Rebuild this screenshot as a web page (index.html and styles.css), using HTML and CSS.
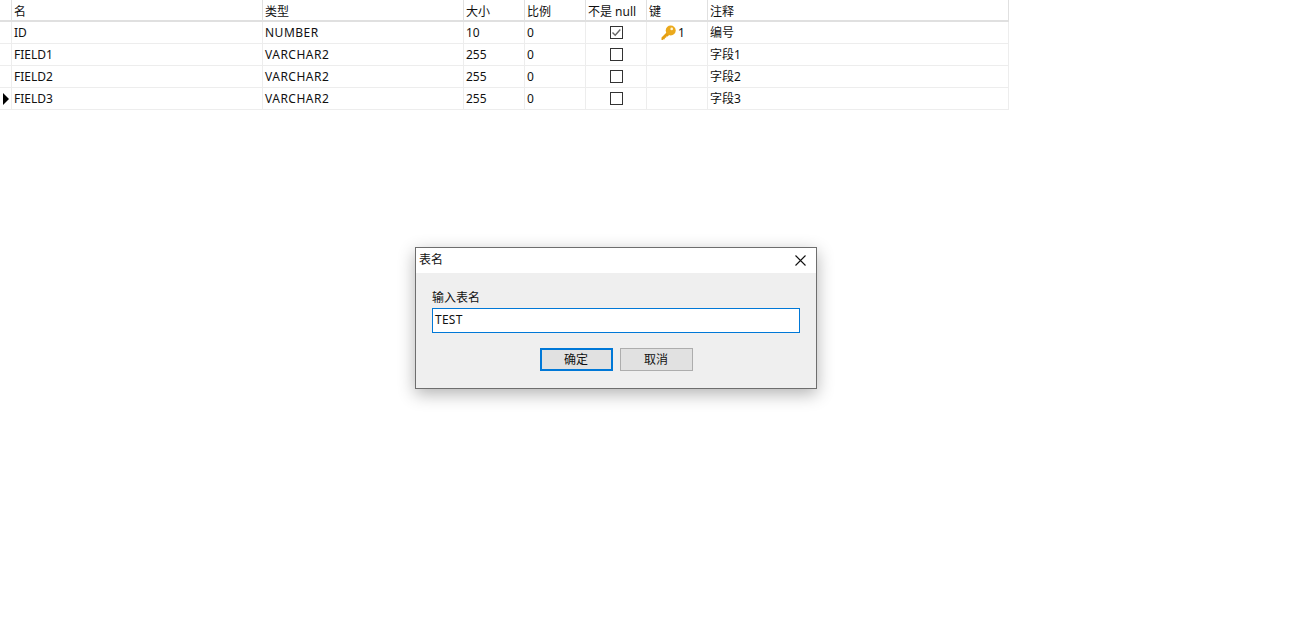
FILE: index.html
```html
<!DOCTYPE html>
<html lang="zh">
<head>
<meta charset="utf-8">
<title>表名</title>
<link rel="stylesheet" href="styles.css">
</head>
<body>
<div class="grid">
  <div class="row head">
    <div class="cell"></div><div class="cell">名</div><div class="cell">类型</div><div class="cell">大小</div><div class="cell">比例</div><div class="cell">不是 null</div><div class="cell">键</div><div class="cell">注释</div>
  </div>
  <div class="row">
    <div class="cell"></div><div class="cell">ID</div><div class="cell type">NUMBER</div><div class="cell">10</div><div class="cell">0</div>
    <div class="cell mid"><svg class="check" width="13" height="13" viewBox="0 0 13 13"><rect x="0.5" y="0.5" width="12" height="12" fill="#fff" stroke="#333"/><path d="M2.500 6.500 5.200 9.200 10.300 3.500" fill="none" stroke="#666" stroke-width="1.400"/></svg></div>
    <div class="cell keycell"><svg width="17" height="17" viewBox="0 0 17 17"><path d="M1.500 13.600 7.300 7.800 9.800 10.200 7.600 12.400H6.200V13.800H4.800V15.200H3.500L2.800 15.900H1.500Z" fill="#e59f12"/><circle cx="10.700" cy="6.500" r="5" fill="#eba91c"/><circle cx="11.700" cy="4.900" r="1.300" fill="#fff6d8"/></svg><span>1</span></div>
    <div class="cell">编号</div>
  </div>
  <div class="row">
    <div class="cell"></div><div class="cell">FIELD1</div><div class="cell type">VARCHAR2</div><div class="cell">255</div><div class="cell">0</div>
    <div class="cell mid"><span class="box"></span></div><div class="cell"></div><div class="cell">字段1</div>
  </div>
  <div class="row">
    <div class="cell"></div><div class="cell">FIELD2</div><div class="cell type">VARCHAR2</div><div class="cell">255</div><div class="cell">0</div>
    <div class="cell mid"><span class="box"></span></div><div class="cell"></div><div class="cell">字段2</div>
  </div>
  <div class="row">
    <div class="cell marker"><span class="arrow"></span></div><div class="cell">FIELD3</div><div class="cell type">VARCHAR2</div><div class="cell">255</div><div class="cell">0</div>
    <div class="cell mid"><span class="box"></span></div><div class="cell"></div><div class="cell">字段3</div>
  </div>
</div>

<div class="dialog">
  <div class="titlebar">
    <span class="title">表名</span>
    <svg class="close" width="11" height="11" viewBox="0 0 11 11"><path d="M.5.5l10 10M10.500.5l-10 10" stroke="#111" stroke-width="1.100" fill="none"/></svg>
  </div>
  <div class="body">
    <div class="label">输入表名</div>
    <div class="input">TEST</div>
    <div class="buttons">
      <div class="btn primary">确定</div>
      <div class="btn">取消</div>
    </div>
  </div>
</div>
</body>
</html>
```

FILE: styles.css
```css
html, body {
  margin: 0;
  padding: 0;
  height: 641px;
  overflow: hidden;
  background: #fff;
  font-family: "Noto Sans", "Noto Sans CJK SC", sans-serif;
  font-size: 12px;
  color: #111;
}
.grid {
  width: 1009px;
}
.row {
  display: grid;
  grid-template-columns: 12px 251px 201px 61px 61px 61px 61px 301px;
  height: 22px;
  box-sizing: border-box;
  border-bottom: 1px solid #ededed;
}
.row.head {
  border-bottom: 2px solid #e0e0e0;
}
.cell {
  border-right: 1px solid #ededed;
  padding-left: 2px;
  line-height: 21px;
  display: flex;
  align-items: center;
  white-space: nowrap;
  box-sizing: border-box;
  min-width: 0;
}
.head .cell {
  border-right-color: #e0e0e0;
  padding-top: 1px;
}
.type {
  letter-spacing: 0.5px;
}
.mid {
  justify-content: center;
  padding-left: 0;
}
.keycell {
  padding-left: 13px;
  gap: 1px;
}
.marker {
  padding-left: 3px;
}
.arrow {
  width: 0;
  height: 0;
  border-left: 6px solid #000;
  border-top: 6px solid transparent;
  border-bottom: 6px solid transparent;
}
.box {
  width: 13px;
  height: 13px;
  box-sizing: border-box;
  border: 1px solid #333;
  background: #fff;
}
.check {
  display: block;
}
.dialog {
  position: absolute;
  left: 415px;
  top: 247px;
  width: 402px;
  height: 142px;
  box-sizing: border-box;
  border: 1px solid #6e6e6e;
  background: #efefef;
  box-shadow: 0 5px 16px rgba(0, 0, 0, 0.3);
}
.titlebar {
  height: 25px;
  background: #fff;
  display: flex;
  align-items: center;
  justify-content: space-between;
  padding: 0 10px 0 3px;
}
.title {
  line-height: 22px;
  height: 24px;
}
.body {
  padding: 16px 16px 0;
}
.label {
  height: 19px;
  line-height: 18px;
}
.input {
  height: 25px;
  box-sizing: border-box;
  border: 1px solid #0078d7;
  background: #fff;
  line-height: 21px;
  padding-left: 2px;
  letter-spacing: 0.25px;
}
.buttons {
  display: flex;
  justify-content: center;
  gap: 7px;
  margin-top: 15px;
}
.btn {
  width: 73px;
  height: 23px;
  box-sizing: border-box;
  border: 1px solid #adadad;
  background: #e1e1e1;
  text-align: center;
  line-height: 21px;
}
.btn.primary {
  border: 2px solid #0078d7;
  line-height: 19px;
}
```
